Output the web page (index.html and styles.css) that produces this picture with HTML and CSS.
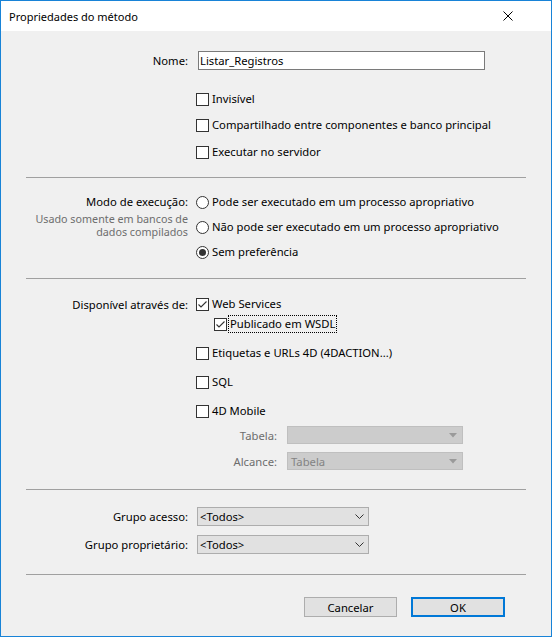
FILE: index.html
```html
<!DOCTYPE html>
<html lang="pt">
<head>
<meta charset="utf-8">
<title>Propriedades do método</title>
<link rel="stylesheet" href="styles.css">
</head>
<body>
<div class="win">
  <div class="titlebar">
    <span class="title">Propriedades do método</span>
    <svg class="close" width="10" height="10" viewBox="0 0 10 10"><path d="M0.5 0.5 L9.5 9.5 M9.5 0.5 L0.5 9.5" stroke="#000" stroke-width="1" fill="none"/></svg>
  </div>
  <div class="content">
    <section class="sec sec1">
      <div class="row r-nome">
        <div class="lbl">Nome:</div>
        <div class="ctl"><div class="input">Listar_Registros</div></div>
      </div>
      <div class="row r-inv">
        <div class="lbl"></div>
        <div class="ctl"><span class="cb"></span><span class="txt">Invisível</span></div>
      </div>
      <div class="row r-comp">
        <div class="lbl"></div>
        <div class="ctl"><span class="cb"></span><span class="txt">Compartilhado entre componentes e banco principal</span></div>
      </div>
      <div class="row r-exec">
        <div class="lbl"></div>
        <div class="ctl"><span class="cb"></span><span class="txt">Executar no servidor</span></div>
      </div>
    </section>
    <div class="divider d1"></div>
    <section class="sec sec2">
      <div class="leftcol">
        <div class="lbl lbl-top">Modo de execução:</div>
        <div class="note">
          <div class="noteline">Usado somente em bancos de</div>
          <div class="noteline">dados compilados</div>
        </div>
      </div>
      <div class="rightcol">
        <div class="row r-rad1"><span class="rb"></span><span class="txt">Pode ser executado em um processo apropriativo</span></div>
        <div class="row r-rad2"><span class="rb"></span><span class="txt">Não pode ser executado em um processo apropriativo</span></div>
        <div class="row r-rad3"><span class="rb on"></span><span class="txt">Sem preferência</span></div>
      </div>
    </section>
    <div class="divider d2"></div>
    <section class="sec sec3">
      <div class="row r-ws">
        <div class="lbl">Disponível através de:</div>
        <div class="ctl"><span class="cb checked"><svg width="11" height="11" viewBox="0 0 11 11"><path d="M1.5 5.5 L4 8 L9.5 2.5" stroke="#333" stroke-width="1.1" fill="none"/></svg></span><span class="txt">Web Services</span></div>
      </div>
      <div class="row r-wsdl">
        <div class="lbl"></div>
        <div class="ctl sub"><span class="cb checked"><svg width="11" height="11" viewBox="0 0 11 11"><path d="M1.5 5.5 L4 8 L9.5 2.5" stroke="#333" stroke-width="1.1" fill="none"/></svg></span><span class="txt focus">Publicado em WSDL</span></div>
      </div>
      <div class="row r-et">
        <div class="lbl"></div>
        <div class="ctl"><span class="cb"></span><span class="txt">Etiquetas e URLs 4D (4DACTION...)</span></div>
      </div>
      <div class="row r-sql">
        <div class="lbl"></div>
        <div class="ctl"><span class="cb"></span><span class="txt">SQL</span></div>
      </div>
      <div class="row r-mob">
        <div class="lbl"></div>
        <div class="ctl"><span class="cb"></span><span class="txt">4D Mobile</span></div>
      </div>
      <div class="row r-tab">
        <div class="lbl"></div>
        <div class="ctl">
          <span class="sublbl">Tabela:</span>
          <div class="dd"><span class="ddtxt"></span><svg class="tri" width="8" height="5" viewBox="0 0 8 5"><path d="M0 0 L8 0 L4 4.5 Z" fill="#9a9a9a"/></svg></div>
        </div>
      </div>
      <div class="row r-alc">
        <div class="lbl"></div>
        <div class="ctl">
          <span class="sublbl">Alcance:</span>
          <div class="dd"><span class="ddtxt">Tabela</span><svg class="tri" width="8" height="5" viewBox="0 0 8 5"><path d="M0 0 L8 0 L4 4.5 Z" fill="#9a9a9a"/></svg></div>
        </div>
      </div>
    </section>
    <div class="divider d3"></div>
    <section class="sec sec4">
      <div class="row r-g1">
        <div class="lbl">Grupo acesso:</div>
        <div class="ctl"><div class="sel"><span>&lt;Todos&gt;</span><svg class="chev" width="9" height="5" viewBox="0 0 9 5"><path d="M0.5 0.5 L4.5 4.5 L8.5 0.5" stroke="#333" stroke-width="1" fill="none"/></svg></div></div>
      </div>
      <div class="row r-g2">
        <div class="lbl">Grupo proprietário:</div>
        <div class="ctl"><div class="sel"><span>&lt;Todos&gt;</span><svg class="chev" width="9" height="5" viewBox="0 0 9 5"><path d="M0.5 0.5 L4.5 4.5 L8.5 0.5" stroke="#333" stroke-width="1" fill="none"/></svg></div></div>
      </div>
    </section>
    <div class="divider d4"></div>
    <div class="buttons">
      <div class="btn">Cancelar</div>
      <div class="btn ok">OK</div>
    </div>
  </div>
</div>
</body>
</html>
```

FILE: styles.css
```css
* { box-sizing: border-box; }
html, body { margin: 0; padding: 0; }
body {
  font-family: "Noto Sans", "Liberation Sans", sans-serif;
  font-size: 11.25px;
  color: #000;
  background: #fff;
}
.win {
  width: 552px;
  height: 637px;
  border: 1px solid #1883d7;
  background: #f0f0f0;
  display: flex;
  flex-direction: column;
}
.titlebar {
  height: 30px;
  background: #fff;
  display: flex;
  align-items: center;
  justify-content: space-between;
  padding-left: 8px;
  padding-right: 38px;
  flex: none;
}
.title { font-size: 11px; line-height: 16px; padding-top: 1px; }
.close { display: block; }
.content { display: flex; flex-direction: column; }
.row { display: flex; align-items: center; height: 16px; flex: none; }
.lbl { width: 187px; text-align: right; flex: none; white-space: nowrap; }
.ctl { margin-left: 8px; display: flex; align-items: center; }
.txt { margin-left: 3px; white-space: nowrap; line-height: 16px; }

.cb {
  width: 13px; height: 13px;
  border: 1px solid #333;
  background: #fff;
  flex: none;
  display: flex; align-items: center; justify-content: center;
}
.cb svg { display: block; }
.rb {
  width: 13px; height: 13px;
  border: 1px solid #333;
  border-radius: 50%;
  background: #fff;
  flex: none;
  display: flex; align-items: center; justify-content: center;
}
.rb.on::after {
  content: "";
  width: 7px; height: 7px;
  border-radius: 50%;
  background: #333;
}

.r-nome { height: 19px; margin-top: 20px; }
.input {
  margin-left: 2px;
  width: 287px; height: 19px;
  border: 1px solid #7a7a7a;
  background: #fff;
  padding-left: 1px;
  line-height: 17px;
}
.r-inv { margin-top: 21px; }
.r-comp { margin-top: 10px; }
.r-exec { margin-top: 11px; }

.divider {
  margin-left: 25px;
  width: 500px;
  height: 1px;
  background: #a0a0a0;
  flex: none;
}
.d1 { margin-top: 17px; }

.sec2 { display: flex; margin-top: 16px; }
.leftcol { width: 187px; flex: none; }
.lbl-top { height: 16px; line-height: 16px; }
.note {
  margin-top: 3px;
  text-align: right;
  font-size: 10.75px;
  color: #6d6d6d;
}
.noteline { height: 13px; line-height: 13px; white-space: nowrap; }
.rightcol { margin-left: 8px; display: flex; flex-direction: column; }
.r-rad2, .r-rad3 { margin-top: 9px; }
.d2 { margin-top: 18px; }

.r-ws { margin-top: 17px; }
.r-wsdl { margin-top: 4px; }
.ctl.sub { margin-left: 26px; }
.focus {
  outline: 1px dotted #000;
  outline-offset: 0;
  padding: 0 1px;
  margin-left: 2px;
}
.r-et, .r-sql, .r-mob { margin-top: 13px; }
.r-tab { margin-top: 7px; height: 18px; }
.r-alc { margin-top: 8px; height: 18px; }
.sublbl {
  width: 81px;
  text-align: right;
  color: #6d6d6d;
}
.dd {
  margin-left: 10px;
  width: 176px; height: 18px;
  background: #cccccc;
  border: 1px solid #bfbfbf;
  display: flex; align-items: center; justify-content: space-between;
  padding-left: 3px; padding-right: 5px;
  color: #838383;
}
.tri { display: block; }
.d3 { margin-top: 19px; }

.r-g1 { margin-top: 17px; height: 19px; }
.r-g2 { margin-top: 9px; height: 19px; }
.sel {
  margin-left: 1px;
  width: 172px; height: 19px;
  background: #e1e1e1;
  border: 1px solid #adadad;
  display: flex; align-items: center; justify-content: space-between;
  padding-left: 2px; padding-right: 4px;
}
.chev { display: block; }
.d4 { margin-top: 20px; }

.buttons {
  margin-top: 22px;
  display: flex;
  justify-content: flex-end;
  padding-right: 46px;
  gap: 14px;
}
.btn {
  width: 93px; height: 20px;
  background: #e1e1e1;
  border: 1px solid #adadad;
  display: flex; align-items: center; justify-content: center;
}
.btn.ok {
  width: 94px;
  border: 2px solid #0078d7;
}
```
